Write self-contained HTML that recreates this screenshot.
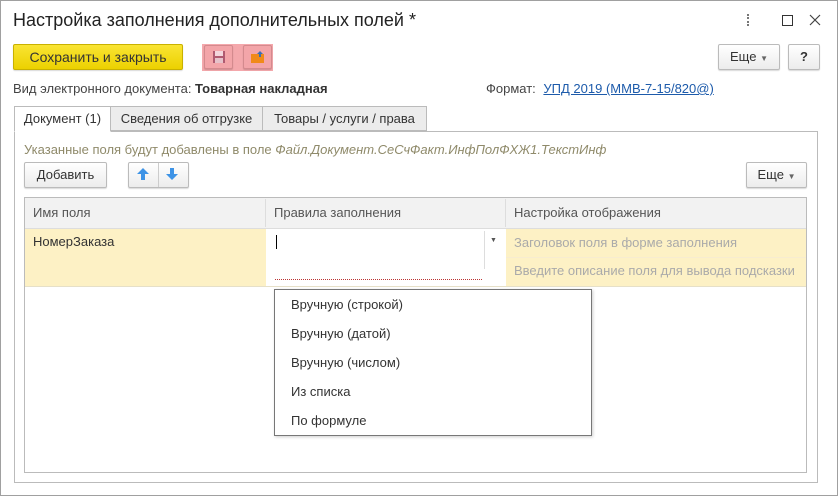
<!DOCTYPE html>
<html><head><meta charset="utf-8"><style>
body{margin:0;width:838px;height:496px;background:#fff;font-family:"Liberation Sans",sans-serif;font-size:13px;color:#333;position:relative;overflow:hidden}
.a{position:absolute}
.win{left:0;top:0;width:836px;height:494px;border:1px solid #a0a0a0}
.btn{position:absolute;border:1px solid #bbb;border-radius:2px;background:linear-gradient(#fff,#ececec);box-sizing:border-box;text-align:center;box-shadow:0 1px 1px rgba(0,0,0,.15)}
.tab{position:absolute;top:106px;height:25px;box-sizing:border-box;border:1px solid #bbb;background:#ececec;line-height:24px;text-align:center;font-size:13px}
.cell{position:absolute;box-sizing:border-box;line-height:28px;padding-left:8px}
</style></head><body>
<div class="a win"></div>
<div class="a" style="left:13px;top:10px;font-size:18px;color:#222">Настройка заполнения дополнительных полей *</div>
<div class="a" style="left:747px;top:14px;width:2px;height:12px;border-left:2px dotted #777"></div>
<div class="a" style="left:782px;top:15px;width:9px;height:9px;border:1px solid #333"></div>
<svg class="a" style="left:809px;top:14px" width="12" height="12"><path d="M1 1L11 11M11 1L1 11" stroke="#444" stroke-width="1.2"/></svg>

<div class="btn" style="left:13px;top:44px;width:170px;height:26px;background:linear-gradient(#f9e433,#ecd100);border-color:#c9b100;line-height:24px;font-size:14px;color:#333">Сохранить и закрыть</div>
<div class="a" style="left:202px;top:44px;width:71px;height:27px;background:#f4a8ac"></div>
<div class="btn" style="left:204px;top:45px;width:29px;height:24px;background:#f3a5a9;border-color:#d48a8e"><svg width="14" height="14" style="margin-top:4px" viewBox="0 0 14 14"><rect x="1" y="1" width="12" height="12" fill="#b05a70"/><rect x="3" y="1" width="8" height="5" fill="#f3d6dc"/><rect x="3" y="8" width="8" height="5" fill="#e6c2ca"/></svg></div>
<div class="btn" style="left:243px;top:45px;width:29px;height:24px;background:#f3a5a9;border-color:#d48a8e"><svg width="16" height="14" style="margin-top:4px" viewBox="0 0 16 14"><rect x="1" y="4" width="13" height="9" fill="#f08a1a"/><path d="M10 1l3 3h-2v3h-2V4H7z" fill="#3a6fb3"/></svg></div>
<div class="btn" style="left:718px;top:44px;width:62px;height:26px;line-height:24px">Еще <span style="font-size:8px;color:#666">▼</span></div>
<div class="btn" style="left:788px;top:44px;width:32px;height:26px;line-height:24px;font-weight:bold">?</div>

<div class="a" style="left:13px;top:81px;color:#444">Вид электронного документа: <b style="color:#333">Товарная накладная</b></div>
<div class="a" style="left:486px;top:81px;color:#444">Формат: <span style="color:#1d5bab;text-decoration:underline;margin-left:4px">УПД 2019 (ММВ-7-15/820@)</span></div>

<div class="a" style="left:14px;top:131px;width:804px;height:352px;border:1px solid #bbb;box-sizing:border-box"></div>
<div class="tab" style="left:14px;width:97px;background:#fff;border-bottom-color:#fff;height:26px">Документ (1)</div>
<div class="tab" style="left:110px;width:153px">Сведения об отгрузке</div>
<div class="tab" style="left:262px;width:165px">Товары / услуги / права</div>

<div class="a" style="left:24px;top:142px;color:#8f8a6a">Указанные поля будут добавлены в поле <i>Файл.Документ.СеСчФакт.ИнфПолФХЖ1.ТекстИнф</i></div>
<div class="btn" style="left:24px;top:162px;width:83px;height:26px;line-height:24px">Добавить</div>
<div class="btn" style="left:128px;top:162px;width:61px;height:26px"></div>
<div class="a" style="left:158px;top:163px;width:1px;height:24px;background:#ccc"></div>
<svg class="a" style="left:136px;top:167px" width="14" height="14"><path d="M7 1L1 7h4v6h4V7h4z" fill="#3d93e6"/></svg>
<svg class="a" style="left:165px;top:167px" width="14" height="14"><path d="M7 13L1 7h4V1h4v6h4z" fill="#3d93e6"/></svg>
<div class="btn" style="left:746px;top:162px;width:61px;height:26px;line-height:24px">Еще <span style="font-size:8px;color:#666">▼</span></div>

<div class="a" style="left:24px;top:197px;width:783px;height:276px;border:1px solid #bbb;box-sizing:border-box"></div>
<div class="a" style="left:25px;top:198px;width:781px;height:30px;background:#f2f2f2;border-bottom:1px solid #ddd"></div>
<div class="cell" style="left:25px;top:199px;width:241px;border-right:1px solid #ddd;color:#555">Имя поля</div>
<div class="cell" style="left:266px;top:199px;width:240px;border-right:1px solid #ddd;color:#555">Правила заполнения</div>
<div class="cell" style="left:506px;top:199px;color:#555">Настройка отображения</div>
<div class="a" style="left:25px;top:229px;width:781px;height:57px;background:#fdf1c5;border-bottom:1px solid #e6e0c8"></div>
<div class="cell" style="left:25px;top:228px">НомерЗаказа</div>
<div class="a" style="left:266px;top:229px;width:240px;height:57px;background:#fff"></div>
<div class="a" style="left:276px;top:235px;width:1px;height:14px;background:#000"></div>
<div class="a" style="left:484px;top:231px;width:1px;height:38px;background:#ddd"></div>
<div class="a" style="left:490px;top:237px;font-size:7px;color:#555">▼</div>
<div class="a" style="left:275px;top:279px;width:207px;border-top:1px dotted #b33"></div>
<div class="a" style="left:506px;top:257px;width:300px;height:1px;background:#f7ecd0"></div>
<div class="cell" style="left:506px;top:229px;color:#aaa">Заголовок поля в форме заполнения</div>
<div class="cell" style="left:506px;top:257px;color:#aaa">Введите описание поля для вывода подсказки</div>

<div class="a" style="left:274px;top:289px;width:318px;height:147px;border:1px solid #777;background:#fff;box-sizing:border-box;box-shadow:1px 1px 3px rgba(0,0,0,.2)"></div>
<div class="a" style="left:291px;top:290px;line-height:29px">Вручную (строкой)<br>Вручную (датой)<br>Вручную (числом)<br>Из списка<br>По формуле</div>
</body></html>
